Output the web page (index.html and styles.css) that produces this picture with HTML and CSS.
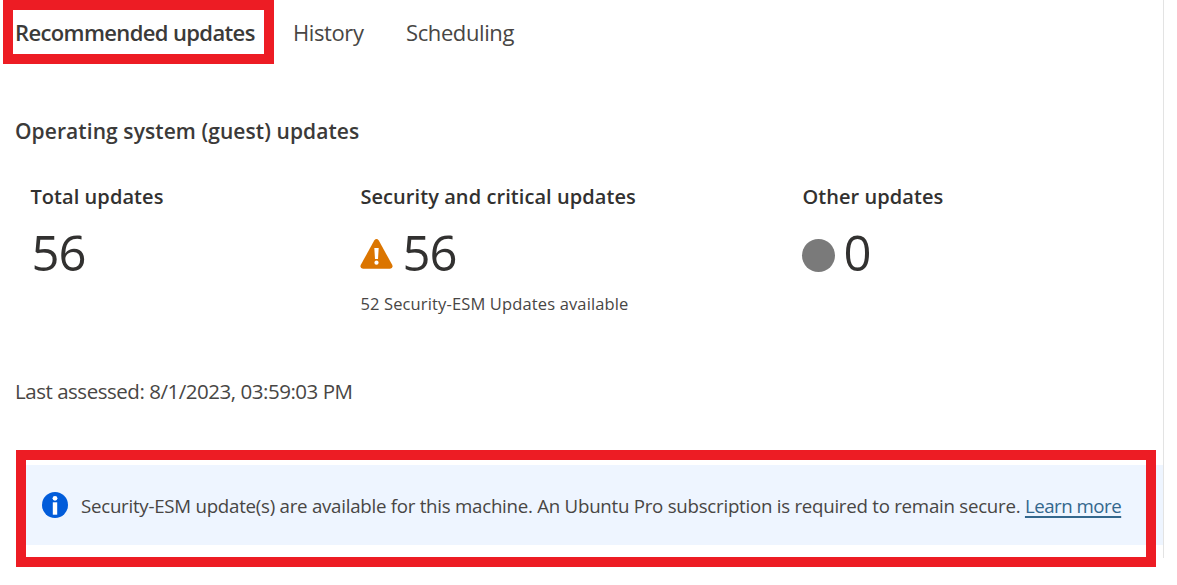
FILE: index.html
```html
<!DOCTYPE html>
<html lang="en">
<head>
<meta charset="utf-8">
<title>Recommended updates</title>
<link rel="stylesheet" href="styles.css">
</head>
<body>
<main class="panel">
  <nav class="tabs">
    <a class="tab tab-active">Recommended updates</a>
    <a class="tab tab-history">History</a>
    <a class="tab tab-scheduling">Scheduling</a>
  </nav>
  <h2 class="section-title">Operating system (guest) updates</h2>
  <section class="stats">
    <div class="stat">
      <h3 class="stat-label">Total updates</h3>
      <div class="stat-value value-plain"><span>56</span></div>
    </div>
    <div class="stat">
      <h3 class="stat-label">Security and critical updates</h3>
      <div class="stat-value">
        <svg class="warning-icon" viewBox="0 0 33 30"><path d="M14.2 1.5Q16.5-1.3 18.8 1.5L32.3 26.1Q33.3 29.5 30 29.8H3Q-.3 29.5.7 26.1Z" fill="#db7500"/><path d="M14.3 9H18.7L18 20H15Z" fill="#fff"/><circle cx="16.5" cy="23.7" r="2.1" fill="#fff"/></svg>
        <span>56</span>
      </div>
      <p class="stat-note">52 Security-ESM Updates available</p>
    </div>
    <div class="stat">
      <h3 class="stat-label">Other updates</h3>
      <div class="stat-value"><i class="dot"></i><span>0</span></div>
    </div>
  </section>
  <p class="assessed">Last assessed: 8/1/2023, 03:59:03 PM</p>
  <div class="banner">
    <svg class="info-icon" viewBox="0 0 26 26"><circle cx="13" cy="13" r="13" fill="#015cda"/><circle cx="13" cy="6.3" r="2.4" fill="#fff"/><rect x="10.8" y="10.3" width="4.4" height="12.4" fill="#fff"/></svg>
    <p class="banner-text">Security-ESM update(s) are available for this machine. An Ubuntu Pro subscription is required to remain secure. <a class="link">Learn more</a></p>
  </div>
</main>
<div class="highlight highlight-tab"></div>
<div class="highlight highlight-banner"></div>
</body>
</html>
```
FILE: styles.css
```css
* { box-sizing: border-box; margin: 0; padding: 0; }
body {
  width: 1177px;
  height: 585px;
  overflow: hidden;
  background: #fff;
  color: #323130;
  font-family: "Open Sans", "Noto Sans", sans-serif;
}
.panel {
  width: 1164px;
  height: 558px;
  padding-left: 15px;
  border-right: 1px solid #e3e3e3;
  white-space: nowrap;
}
.tabs { display: flex; height: 64px; padding-top: 17px; }
.tab { font-size: 22px; line-height: 30px; color: #484644; letter-spacing: -0.4px; }
.tab-active { width: 278px; font-weight: 600; color: #3b3a39; letter-spacing: -0.63px; }
.tab-history { width: 113px; }
.section-title {
  margin-top: 52px;
  font-size: 21px;
  line-height: 30px;
  font-weight: 600;
  color: #3b3a39;
  letter-spacing: 0.08px;
}
.stats { display: grid; grid-template-columns: 330px 442px 1fr; height: 178px; padding: 36px 0 0 15.4px; }
.stat-label { font-size: 20px; line-height: 30px; font-weight: 600; letter-spacing: 0.07px; }
.stat-value { display: flex; height: 64px; margin-top: 8px; font-size: 49px; line-height: 64px; letter-spacing: -1px; }
.value-plain { padding-left: 1px; }
.warning-icon { width: 33px; height: 30px; margin: 19px 9px 0 0; }
.dot { width: 33px; height: 33px; margin: 19px 8px 0 0; border-radius: 50%; background: #7a7a7a; }
.stat-note { margin-top: 8px; font-size: 16.5px; line-height: 24px; color: #484644; letter-spacing: 0.14px; }
.assessed { margin-top: 52px; font-size: 20.5px; line-height: 30px; color: #484644; letter-spacing: -0.47px; }
.banner {
  display: flex;
  align-items: center;
  height: 80px;
  margin: 59px 0 0 3px;
  padding-left: 24px;
  background: #eef5ff;
}
.info-icon { width: 26px; height: 26px; margin-right: 13px; }
.banner-text { padding-top: 2px; font-size: 18.7px; line-height: 28px; color: #484644; letter-spacing: -0.258px; }
.link { color: #33678d; letter-spacing: -0.5px; text-decoration: underline; text-underline-offset: 3px; text-decoration-thickness: 2px; }
.highlight { position: absolute; border: 10px solid #ed1c24; }
.highlight-tab { left: 3px; top: 0; width: 271px; height: 64px; }
.highlight-banner { left: 16px; top: 450px; width: 1140px; height: 117px; }
```
